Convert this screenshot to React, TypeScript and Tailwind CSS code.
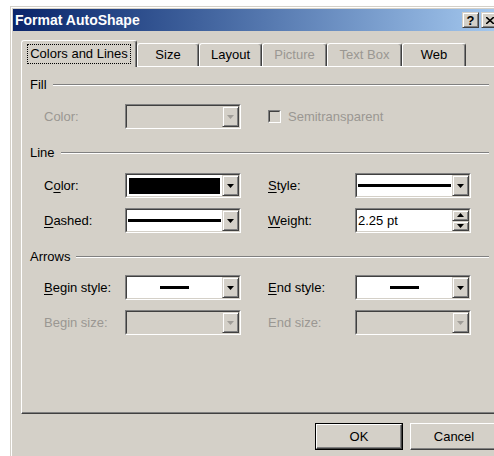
import clsx from "clsx";
import type { ReactNode } from "react";

const FACE = "bg-[#d4d0c8]";

function Arrow({ up, disabled }: { up?: boolean; disabled?: boolean }) {
  return (
    <svg width="7" height="4" viewBox="0 0 7 4" className="block">
      <polygon
        points={up ? "0,4 7,4 3.5,0" : "0,0 7,0 3.5,4"}
        fill={disabled ? "#a09d98" : "#000"}
      />
    </svg>
  );
}

function DropButton({ disabled }: { disabled?: boolean }) {
  return (
    <div className="flex w-[17px] items-center justify-center border border-t-[#d4d0c8] border-l-[#d4d0c8] border-b-[#404040] border-r-[#404040] bg-[#d4d0c8] shadow-[inset_1px_1px_#fff,inset_-1px_-1px_#808080]">
      <Arrow disabled={disabled} />
    </div>
  );
}

function Sunken({ disabled, children, className }: { disabled?: boolean; children: ReactNode; className?: string }) {
  return (
    <div className={clsx("flex h-[25px] w-[116px] border border-t-[#808080] border-l-[#808080] border-b-white border-r-white", className)}>
      <div
        className={clsx(
          "flex flex-1 border border-t-[#404040] border-l-[#404040] border-b-[#d4d0c8] border-r-[#d4d0c8]",
          disabled ? FACE : "bg-white"
        )}
      >
        {children}
      </div>
    </div>
  );
}

function Combo({ disabled, children }: { disabled?: boolean; children?: ReactNode }) {
  return (
    <Sunken disabled={disabled}>
      <div className="flex flex-1 items-center">{children}</div>
      <DropButton disabled={disabled} />
    </Sunken>
  );
}

function Spinner({ value }: { value: string }) {
  return (
    <Sunken>
      <div className="flex flex-1 items-center pl-[1px] text-black">{value}</div>
      <div className="flex w-[17px] flex-col">
        <div className="flex flex-1 items-center justify-center border border-t-[#d4d0c8] border-l-[#d4d0c8] border-b-[#404040] border-r-[#404040] bg-[#d4d0c8] shadow-[inset_1px_1px_#fff,inset_-1px_-1px_#808080]">
          <Arrow up />
        </div>
        <div className="flex flex-1 items-center justify-center border border-t-[#d4d0c8] border-l-[#d4d0c8] border-b-[#404040] border-r-[#404040] bg-[#d4d0c8] shadow-[inset_1px_1px_#fff,inset_-1px_-1px_#808080]">
          <Arrow />
        </div>
      </div>
    </Sunken>
  );
}

function Label({ text, ul, disabled, className }: { text: string; ul?: number; disabled?: boolean; className?: string }) {
  return (
    <span className={clsx(disabled ? "text-[#9a9792]" : "text-black", className)}>
      {ul === undefined ? (
        text
      ) : (
        <>
          {text.slice(0, ul)}
          <span className="underline underline-offset-2">{text[ul]}</span>
          {text.slice(ul + 1)}
        </>
      )}
    </span>
  );
}

function Group({ title, className }: { title: string; className?: string }) {
  return (
    <div className={clsx("flex h-4 w-[459px] items-center", className)}>
      <span className="text-black">{title}</span>
      <div className="ml-[6px] flex-1 border-t border-b border-t-[#808080] border-b-white" />
    </div>
  );
}

function Row({ children, className }: { children: ReactNode; className?: string }) {
  return <div className={clsx("flex h-[25px] items-center", className)}>{children}</div>;
}

const thick = <div className="mx-[1px] h-[3px] flex-1 bg-black" />;
const arrowLine = <div className="mx-auto h-[3px] w-[29px] bg-black" />;

function Tab({ label, width, disabled }: { label: string; width: number; disabled?: boolean }) {
  return (
    <div
      style={{ width }}
      className="flex h-[23px] items-center justify-center rounded-t-[3px] border-l border-t border-r border-l-white border-t-white border-r-[#404040] shadow-[inset_-1px_0_#808080]"
    >
      <span className={disabled ? "text-[#9a9792]" : "text-black"}>{label}</span>
    </div>
  );
}

export default function App() {
  return (
    <div className="h-[456px] w-[494px] overflow-hidden bg-white font-['Liberation_Sans',Arial,sans-serif] text-[13px] leading-4">
      <div className="ml-[10px] mt-[6px] h-[460px] w-[540px] border-l border-t border-l-[#d4d0c8] border-t-[#d4d0c8] bg-[#d4d0c8]">
        <div className="h-full border-l border-t border-l-white border-t-white pl-[1px] pt-[1px]">
          {/* title bar */}
          <div className="flex h-[22px] w-[487px] items-center bg-linear-to-r from-[#0a246a] to-[#a6caf0] pl-[2px] pr-[2px]">
            <span className="flex-1 text-[14px] font-bold text-white">Format AutoShape</span>
            <div className="flex h-[16px] w-[17px] items-center justify-center border border-t-[#d4d0c8] border-l-[#d4d0c8] border-b-[#404040] border-r-[#404040] bg-[#d4d0c8] text-[13px] font-bold leading-none text-black shadow-[inset_1px_1px_#fff,inset_-1px_-1px_#808080]">
              ?
            </div>
            <div className="ml-[2px] flex h-[16px] w-[17px] items-center justify-center border border-t-[#d4d0c8] border-l-[#d4d0c8] border-b-[#404040] border-r-[#404040] bg-[#d4d0c8] shadow-[inset_1px_1px_#fff,inset_-1px_-1px_#808080]">
              <svg width="8" height="7" viewBox="0 0 8 7">
                <path d="M0 0 L8 7 M8 0 L0 7" stroke="#000" strokeWidth="1.6" />
              </svg>
            </div>
          </div>

          {/* tabs */}
          <div className="ml-[8px] mt-[10px] flex h-[25px] items-end">
            <div className="relative z-10 -mb-[1px] flex h-[27px] w-[116px] items-start justify-center rounded-t-[3px] border-l border-t border-r border-l-white border-t-white border-r-[#404040] bg-[#d4d0c8] pt-[3px] shadow-[inset_-1px_0_#808080]">
              <span className="border border-dotted border-black px-[2px] py-[1px] text-black">Colors and Lines</span>
            </div>
            <Tab label="Size" width={62} />
            <Tab label="Layout" width={63} />
            <Tab label="Picture" width={65} disabled />
            <Tab label="Text Box" width={75} disabled />
            <Tab label="Web" width={64} />
          </div>

          {/* page; its right edge runs past the visible area */}
          <div className="ml-[8px] h-[348px] w-[500px] border border-l-white border-t-white border-b-[#404040] border-r-[#404040] pl-[8px] pt-[10px] shadow-[inset_-1px_-1px_#808080]">
            <Group title="Fill" />
            <Row className="mt-[11px]">
              <Label text="Color:" disabled className="w-[95px] pl-[14px]" />
              <Combo disabled />
              <div className="ml-[27px] flex items-center">
                <div className="h-[13px] w-[13px] border border-t-[#808080] border-l-[#808080] border-b-white border-r-white">
                  <div className="h-full w-full border border-t-[#404040] border-l-[#404040] border-b-[#d4d0c8] border-r-[#d4d0c8]" />
                </div>
                <Label text="Semitransparent" disabled className="ml-[7px]" />
              </div>
            </Row>

            <Group title="Line" className="mt-[16px]" />
            <Row className="mt-[12px]">
              <Label text="Color:" ul={1} className="w-[95px] pl-[14px]" />
              <Combo>
                <div className="mx-[2px] my-[2px] h-[16px] flex-1 bg-black" />
              </Combo>
              <Label text="Style:" ul={0} className="ml-[27px] w-[87px]" />
              <Combo>{thick}</Combo>
            </Row>
            <Row className="mt-[10px]">
              <Label text="Dashed:" ul={0} className="w-[95px] pl-[14px]" />
              <Combo>{thick}</Combo>
              <Label text="Weight:" ul={0} className="ml-[27px] w-[87px]" />
              <Spinner value="2.25 pt" />
            </Row>

            <Group title="Arrows" className="mt-[16px]" />
            <Row className="mt-[10px]">
              <Label text="Begin style:" ul={0} className="w-[95px] pl-[14px]" />
              <Combo>{arrowLine}</Combo>
              <Label text="End style:" ul={0} className="ml-[27px] w-[87px]" />
              <Combo>{arrowLine}</Combo>
            </Row>
            <Row className="mt-[10px]">
              <Label text="Begin size:" disabled className="w-[95px] pl-[14px]" />
              <Combo disabled />
              <Label text="End size:" disabled className="ml-[27px] w-[87px]" />
              <Combo disabled />
            </Row>
          </div>

          {/* buttons */}
          <div className="mt-[9px] flex w-[485px] justify-end gap-[7px]">
            <div className="h-[27px] w-[88px] border border-black">
              <div className="flex h-full items-center justify-center border border-t-white border-l-white border-b-[#404040] border-r-[#404040] shadow-[inset_-1px_-1px_#808080] text-black">
                OK
              </div>
            </div>
            <div className="flex h-[27px] w-[88px] items-center justify-center border border-t-white border-l-white border-b-[#404040] border-r-[#404040] shadow-[inset_-1px_-1px_#808080] text-black">
              Cancel
            </div>
          </div>
        </div>
      </div>
    </div>
  );
}
